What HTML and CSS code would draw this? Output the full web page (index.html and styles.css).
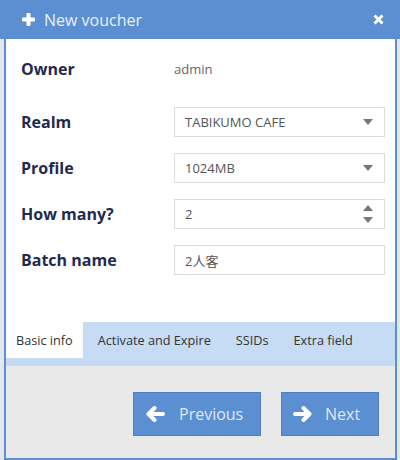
FILE: index.html
```html
<!DOCTYPE html>
<html lang="en">
<head>
    <meta charset="UTF-8">
    <meta name="viewport" content="width=device-width, initial-scale=1.0">
    <title>New voucher</title>
    <link rel="stylesheet" href="styles.css">
</head>
<body>
    <div class="window">
        <div class="header">
            <svg class="icon-plus" width="13" height="13" viewBox="0 0 13 13">
                <rect x="4.5" y="0" width="4" height="13" rx="1"/>
                <rect x="0" y="4.5" width="13" height="4" rx="1"/>
            </svg>
            <span class="title">New voucher</span>
            <svg class="icon-close" width="11" height="11" viewBox="0 0 11 11">
                <path d="M1.5 1.5 L9.5 9.5 M9.5 1.5 L1.5 9.5"/>
            </svg>
        </div>

        <div class="panel">
            <div class="form">
                <div class="row owner">
                    <div class="label">Owner</div>
                    <div class="value">admin</div>
                </div>
                <div class="row">
                    <div class="label">Realm</div>
                    <div class="field">
                        <span>TABIKUMO CAFE</span>
                        <svg class="caret" width="10" height="6" viewBox="0 0 10 6"><path d="M0 0 H10 L5 6 Z"/></svg>
                    </div>
                </div>
                <div class="row">
                    <div class="label">Profile</div>
                    <div class="field">
                        <span>1024MB</span>
                        <svg class="caret" width="10" height="6" viewBox="0 0 10 6"><path d="M0 0 H10 L5 6 Z"/></svg>
                    </div>
                </div>
                <div class="row">
                    <div class="label">How many?</div>
                    <div class="field">
                        <span>2</span>
                        <div class="spinner">
                            <svg width="10" height="6" viewBox="0 0 10 6"><path d="M0 6 H10 L5 0 Z"/></svg>
                            <svg width="10" height="6" viewBox="0 0 10 6"><path d="M0 0 H10 L5 6 Z"/></svg>
                        </div>
                    </div>
                </div>
                <div class="row">
                    <div class="label">Batch name</div>
                    <div class="field">
                        <span class="cjk">2人客</span>
                    </div>
                </div>
            </div>

            <div class="tabs">
                <div class="tab active">Basic info</div>
                <div class="tab">Activate and Expire</div>
                <div class="tab">SSIDs</div>
                <div class="tab">Extra field</div>
            </div>

            <div class="footer">
                <div class="btn btn-prev">
                    <svg width="19" height="16" viewBox="0 0 19 16">
                        <path d="M17 8 H3 M8.5 2 L2.5 8 L8.5 14"/>
                    </svg>
                    <span>Previous</span>
                </div>
                <div class="btn btn-next">
                    <svg width="19" height="16" viewBox="0 0 19 16">
                        <path d="M2 8 H16 M10.5 2 L16.5 8 L10.5 14"/>
                    </svg>
                    <span>Next</span>
                </div>
            </div>
        </div>
    </div>
</body>
</html>
```

FILE: styles.css
```css
body {
    margin: 0;
    background: #e3e7eb;
    font-family: "Open Sans", "Noto Sans", sans-serif;
}
.window {
    width: 400px;
    height: 460px;
}
.header {
    height: 39px;
    background: #5b8fd1;
    display: flex;
    align-items: center;
    padding: 0 16px 0 22px;
}
.icon-plus {
    fill: #ffffff;
    margin-right: 9px;
}
.title {
    color: #e8f0fa;
    font-size: 16px;
    flex: 1;
}
.icon-close {
    stroke: #ffffff;
    stroke-width: 3;
    fill: none;
}
.panel {
    margin: 0 3px 0 4px;
    border: 2px solid #5b8fd1;
    border-top: none;
    height: 419px;
    display: flex;
    flex-direction: column;
}
.form {
    background: #ffffff;
    height: 283px;
    padding: 15px 10px 0 15px;
    box-sizing: border-box;
}
.row {
    display: flex;
    align-items: center;
    height: 30px;
    margin-bottom: 16px;
}
.row.owner {
    margin-bottom: 23px;
}
.label {
    width: 153px;
    font-size: 16px;
    font-weight: bold;
    color: #1f2a4f;
}
.value {
    font-size: 13px;
    color: #666;
}
.field {
    flex: 1;
    height: 30px;
    box-sizing: border-box;
    border: 1px solid #dcdcdc;
    display: flex;
    align-items: center;
    padding: 0 11px 0 10px;
    font-size: 13px;
    color: #555;
}
.field span {
    flex: 1;
}
.cjk {
    font-family: "Open Sans", "Noto Sans CJK SC", sans-serif;
}
.caret, .spinner svg {
    fill: #777;
}
.spinner {
    display: flex;
    flex-direction: column;
    gap: 6px;
}
.tabs {
    background: #c6dcf5;
    height: 44px;
    display: flex;
    gap: 5px;
    align-items: flex-start;
}
.tab {
    height: 36px;
    display: flex;
    align-items: center;
    padding: 0 10px;
    font-size: 12.7px;
    color: #333;
}
.tab.active {
    background: #ffffff;
}
.footer {
    flex: 1;
    background: #e9e9e9;
    display: flex;
    justify-content: flex-end;
    align-items: flex-start;
    gap: 20px;
    padding: 26px 16px 0 0;
}
.btn {
    height: 44px;
    box-sizing: border-box;
    background: #5b8fd1;
    border: 1px solid #4f80c0;
    display: flex;
    align-items: center;
    font-size: 16px;
    color: #dde9f8;
    gap: 14px;
}
.btn svg {
    stroke: #ffffff;
    stroke-width: 4;
    stroke-linecap: round;
    stroke-linejoin: round;
    fill: none;
}
.btn-prev {
    width: 128px;
    padding-left: 12px;
}
.btn-next {
    width: 98px;
    padding-left: 11px;
    gap: 13px;
}
```
